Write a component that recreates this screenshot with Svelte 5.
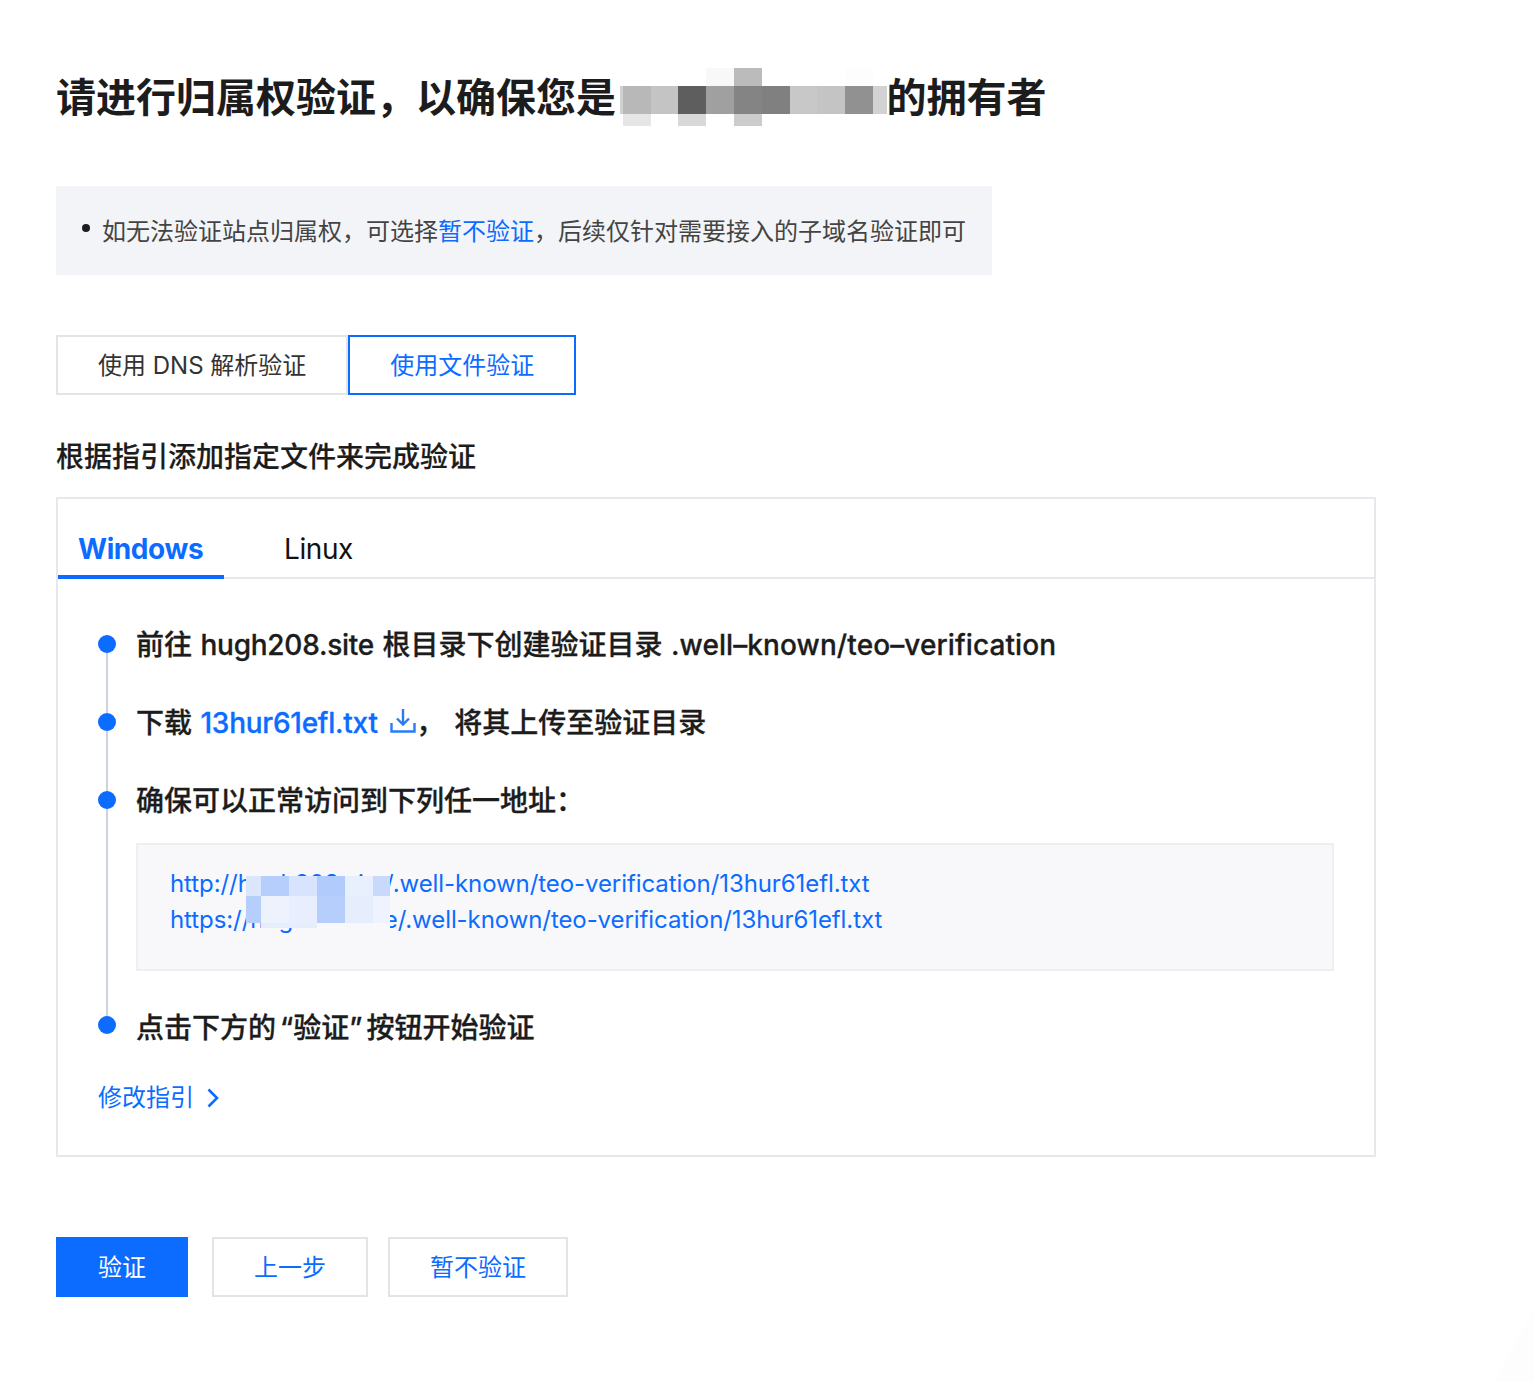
<script>
  // pixelated patches that hide the domain: [x, y, w, h, colour], relative to the patch box
  const titleBlur = [
    [0, 18, 3, 28, '#d0d0d0'], [3, 18, 28, 28, '#b8b8b8'], [31, 18, 27, 28, '#c4c4c4'],
    [58, 18, 28, 28, '#5e5e5e'], [86, 18, 28, 28, '#a0a0a0'], [114, 18, 28, 28, '#848484'],
    [142, 18, 28, 28, '#808080'], [170, 18, 27, 28, '#c8c8c8'], [197, 18, 28, 28, '#c4c4c4'],
    [225, 18, 28, 28, '#919191'], [253, 18, 14, 28, '#d2d2d2'],
    [86, 0, 28, 18, '#f8f8f8'], [114, 0, 28, 18, '#bbbbbb'], [225, 0, 28, 18, '#fdfdfd'],
    [3, 46, 28, 12, '#e6e6e6'], [58, 46, 28, 12, '#d8d8d8'], [114, 46, 28, 12, '#cccccc']
  ]

  const urlBlur = [
    [0, 0, 15, 20, '#dbe6fd'], [15, 0, 28, 20, '#b5cefc'], [43, 0, 28, 20, '#d8e4fd'],
    [71, 0, 28, 20, '#b0cbfc'], [99, 0, 28, 20, '#e8effd'], [127, 0, 17, 20, '#c8d9fc'],
    [0, 20, 15, 27, '#b5cefc'], [15, 20, 28, 27, '#eef2fd'], [43, 20, 28, 27, '#e8eefd'],
    [71, 20, 28, 27, '#b5cefc'], [99, 20, 28, 27, '#e6edfd'], [127, 20, 17, 27, '#eef3fd'],
    [15, 47, 56, 5, '#e6edfd'], [71, 47, 73, 7, '#f8f8fb']
  ]

  const path = '/.well-known/teo-verification/13hur61efl.txt'
</script>

{#snippet patch(blocks)}
  {#each blocks as [x, y, w, h, c]}
    <i style="left:{x}px;top:{y}px;width:{w}px;height:{h}px;background:{c}"></i>
  {/each}
{/snippet}

<main class="page">
  <h1>请进行归属权验证，以确保您是<span class="title-gap"><span class="blur title-blur">{@render patch(titleBlur)}</span></span>的拥有者</h1>

  <div class="notice">
    <span class="bullet"></span>
    <p>如无法验证站点归属权，可选择<a href="#skip">暂不验证</a>，后续仅针对需要接入的子域名验证即可</p>
  </div>

  <div class="methods">
    <button class="method"><span>使用 DNS 解析验证</span></button>
    <button class="method active"><span>使用文件验证</span></button>
  </div>

  <h2>根据指引添加指定文件来完成验证</h2>

  <section class="card">
    <div class="tabs">
      <div class="tab active">Windows</div>
      <div class="tab">Linux</div>
    </div>

    <div class="card-body">
      <ol class="steps">
        <li>前往 <span class="latin">hugh208.site</span> 根目录下创建验证目录 <span class="latin wide">.well–known/teo–verification</span></li>
        <li>
          下载 <a class="latin" href="#file">13hur61efl.txt</a>
          <svg class="dl" width="26" height="26" viewBox="0 0 26 26" fill="none" stroke="#2b7bf6" stroke-width="2.4">
            <path d="M13 1v15M7 10.500l6 6 6-6M1.500 15v8.500h23V15" />
          </svg>，<span class="after-file">将其上传至验证目录</span>
        </li>
        <li class="has-code">
          确保可以正常访问到下列任一地址：
          <div class="code">
            <div>http://hugh208.site{path}</div>
            <div>https://hugh208.site{path}</div>
            <span class="blur url-blur">{@render patch(urlBlur)}</span>
          </div>
        </li>
        <li>点击下方的<span class="quote open">“</span>验证<span class="quote close">”</span>按钮开始验证</li>
      </ol>

      <a class="edit" href="#edit">修改指引
        <svg width="14" height="20" viewBox="0 0 14 20" fill="none" stroke="#0b6cff" stroke-width="2.6">
          <path d="M2.500 1.500 11 10l-8.500 8.500" />
        </svg>
      </a>
    </div>
  </section>

  <div class="actions">
    <button class="btn primary"><span>验证</span></button>
    <button class="btn"><span>上一步</span></button>
    <button class="btn"><span>暂不验证</span></button>
  </div>
</main>

<svg class="corner" width="40" height="72" viewBox="0 0 40 72"><path d="M40 0V72H0Z" fill="#fdfdfd" /></svg>

<style>
  :global(body) {
    margin: 0;
    background: #fff;
  }

  .page {
    box-sizing: border-box;
    height: 1382px;
    padding: 68px 0 0 56px;
    color: #1c1c1c;
    font-family: Inter, "Noto Sans CJK SC", sans-serif;
  }

  h1 {
    margin: 0;
    height: 58px;
    box-sizing: border-box;
    font-size: 40px;
    line-height: 60px;
    font-weight: 700;
    white-space: nowrap;
  }
  .title-gap {
    position: relative;
    display: inline-block;
    width: 270.5px;
    height: 58px;
    vertical-align: top;
  }
  .blur { position: absolute; display: block; }
  .blur i { position: absolute; display: block; }
  .title-blur { left: 4px; top: 0; }

  .notice {
    display: flex;
    align-items: center;
    box-sizing: border-box;
    width: 936px;
    height: 89px;
    margin-top: 60px;
    padding: 0 26px;
    background: #f3f4f7;
    font-size: 24px;
    color: #444;
    white-space: nowrap;
  }
  .notice p { margin: -3px 0 0; }
  .notice a { color: #0b6cff; text-decoration: none; }
  .bullet {
    flex: none;
    width: 8px;
    height: 8px;
    margin: -5px 12px 0 0;
    border-radius: 50%;
    background: #1c1c1c;
  }

  .methods {
    display: flex;
    margin-top: 60px;
  }
  .method {
    box-sizing: border-box;
    height: 60px;
    padding: 0 40px;
    border: 2px solid #e3e4e6;
    background: #fff;
    color: #333;
    font: inherit;
    font-size: 24px;
  }
  .method span, .btn span {
    position: relative;
    top: -2px;
  }
  .method.active {
    border-color: #0b6cff;
    color: #0b6cff;
  }

  h2 {
    margin: 42px 0 0;
    height: 40px;
    font-size: 28px;
    line-height: 40px;
    font-weight: 500;
    -webkit-text-stroke: 0.2px currentColor;
  }

  .card {
    box-sizing: border-box;
    width: 1320px;
    height: 660px;
    margin-top: 20px;
    border: 2px solid #e7e8ed;
  }
  .tabs {
    display: flex;
    gap: 40px;
    height: 80px;
    box-sizing: border-box;
    border-bottom: 2px solid #e7e8ed;
  }
  .tab {
    box-sizing: border-box;
    height: 80px;
    padding: 30px 20px 0 20px;
    font-size: 28px;
    line-height: 40px;
    letter-spacing: -0.4px;
    color: #111;
  }
  .tab.active {
    width: 166px;
    border-bottom: 4px solid #0b6cff;
    color: #0b6cff;
    font-weight: 700;
  }

  .card-body { padding: 46px 40px 0; }

  .steps {
    position: relative;
    margin: 0;
    padding: 0;
    list-style: none;
    font-size: 28px;
    line-height: 40px;
    font-weight: 500;
    word-spacing: 1px;
    -webkit-text-stroke: 0.3px currentColor;
  }
  .steps::before {
    content: "";
    position: absolute;
    left: 8px;
    top: 20px;
    bottom: 20px;
    width: 2px;
    background: #cbd3e0;
  }
  .steps li {
    position: relative;
    min-height: 40px;
    padding: 0 0 38px 38px;
    white-space: nowrap;
  }
  .steps li:last-child { padding-bottom: 0; }
  .steps li::before {
    content: "";
    position: absolute;
    left: 0;
    top: 10px;
    width: 18px;
    height: 18px;
    border-radius: 50%;
    background: #0b6cff;
  }
  .steps li:last-child::before { top: 8px; }
  .steps a { color: #0b6cff; text-decoration: none; }
  .latin { letter-spacing: -0.25px; }
  .latin.wide { letter-spacing: 0.1px; }
  .quote.open { margin-left: 4px; }
  .quote.close { margin-right: 4px; }
  .dl { margin-left: 4px; vertical-align: -1px; -webkit-text-stroke: 0; }
  .after-file { margin-left: 10px; }

  .code {
    position: relative;
    box-sizing: border-box;
    width: 1198px;
    height: 128px;
    margin-top: 22px;
    padding: 21px 32px;
    border: 2px solid #eeeff2;
    background: #f8f8fb;
    color: #0b6cff;
    font-size: 24px;
    line-height: 36px;
    letter-spacing: -0.08px;
    word-spacing: 0;
    font-weight: 400;
    -webkit-text-stroke: 0;
  }
  .url-blur { left: 108px; top: 31px; }
  .has-code { padding-bottom: 37px !important; }

  .edit {
    display: inline-flex;
    align-items: center;
    gap: 12px;
    margin-top: 30px;
    color: #0b6cff;
    font-size: 24px;
    line-height: 40px;
    text-decoration: none;
  }

  .actions {
    display: flex;
    gap: 20px;
    margin-top: 80px;
  }
  .btn {
    box-sizing: border-box;
    height: 60px;
    padding: 0 40px;
    border: 2px solid #e3e4e6;
    background: #fff;
    color: #0b6cff;
    font: inherit;
    font-size: 24px;
  }
  .btn.primary {
    margin-right: 4px;
    border-color: #0b6cff;
    background: #0b6cff;
    color: #fff;
  }

  .corner {
    position: absolute;
    left: 1494px;
    top: 1310px;
  }
</style>
